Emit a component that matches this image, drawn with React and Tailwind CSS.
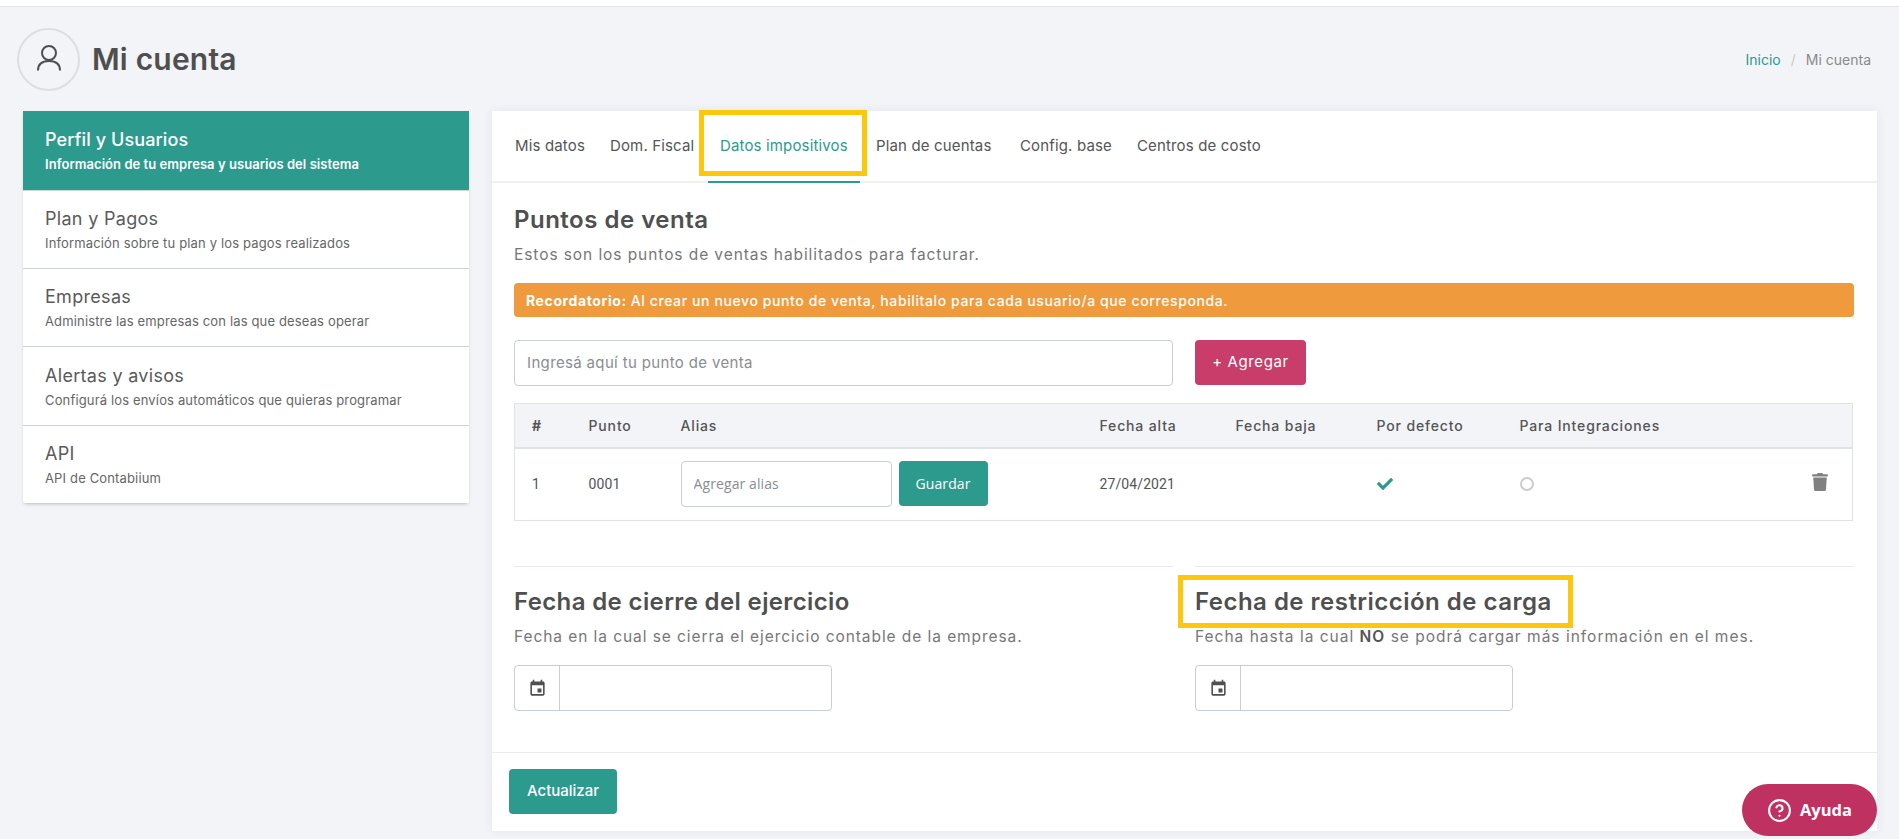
import { MdEvent } from "react-icons/md";
import { FaCheck, FaTrash } from "react-icons/fa";
import { CircleHelp } from "lucide-react";

const menu = [
  { title: "Perfil y Usuarios", sub: "Información de tu empresa y usuarios del sistema", height: "h-[80px]", active: true },
  { title: "Plan y Pagos", sub: "Información sobre tu plan y los pagos realizados", height: "h-[78px]" },
  { title: "Empresas", sub: "Administre las empresas con las que deseas operar", height: "h-[78px]" },
  { title: "Alertas y avisos", sub: "Configurá los envíos automáticos que quieras programar", height: "h-[79px]" },
  { title: "API", sub: "API de Contabiium", height: "h-[78px]" },
];

const tabs = [
  { label: "Mis datos", width: "w-[95px]" },
  { label: "Dom. Fiscal", width: "w-[110px]" },
  { label: "Datos impositivos", width: "w-[152px] mr-[4px]", active: true },
  { label: "Plan de cuentas", width: "w-[144px]" },
  { label: "Config. base", width: "w-[117px]" },
  { label: "Centros de costo", width: "w-[150px]" },
];

const DateField = ({ width, addon }) => (
  <div className={`mt-[18px] flex h-[46px] rounded border border-[#c9cdd4] bg-white ${width}`}>
    <div className={`flex items-center justify-center border-r border-[#c9cdd4] text-[#4f4f4f] ${addon}`}>
      <MdEvent size={19} />
    </div>
    <input className="min-w-0 flex-1 rounded-r outline-none" />
  </div>
);

const App = () => {
  return (
    <div className="relative h-[839px] overflow-hidden bg-[#f3f4f8] font-[Inter,sans-serif] text-[#4f4f4f]">
      <div className="h-[7px] border-b border-[#e3e4e8] bg-white"></div>

      {/* Page header */}
      <div className="flex items-center justify-between pl-[17px] pr-[28px] pt-[21px]">
        <div className="flex items-center gap-[12px]">
          <div className="flex h-[63px] w-[63px] items-center justify-center rounded-full border-2 border-[#dedede]">
            <svg width="24" height="26" viewBox="0 0 24 26" fill="none" stroke="#4f4f4f" strokeWidth="2" className="mb-[3px]">
              <circle cx="12" cy="8" r="7" />
              <path d="M1 25.500c0-5.500 3-9.500 11-9.500s11 4 11 9.500" />
            </svg>
          </div>
          <h1 className="mb-[2px] text-[30px] font-semibold leading-none tracking-[0.2px]">Mi cuenta</h1>
        </div>
        <div className="flex items-center text-[14px]">
          <span className="text-[#2d9a8e]">Inicio</span>
          <span className="mx-[10px] text-[#c9c9c9]">/</span>
          <span className="text-[#8a8a8a]">Mi cuenta</span>
        </div>
      </div>

      <div className="mt-[20px] flex items-start pl-[23px]">
        {/* Side menu */}
        <div className="w-[446px] shrink-0 overflow-hidden rounded-b bg-white shadow-[0_1px_3px_rgba(0,0,0,0.12)]">
          {menu.map((item) => (
            <div
              key={item.title}
              className={`flex flex-col justify-center border-b pl-[22px] ${item.height} ${
                item.active ? "border-[#c9d9d6] bg-[#2d9a8e] text-white" : "border-[#cdd2d9] text-[#5a5a5a]"
              }`}
            >
              <div className={`text-[18px] leading-[26px] ${item.active ? "font-medium tracking-[0.1px]" : "tracking-[0.3px]"}`}>
                {item.title}
              </div>
              <div
                className={`mt-[1px] text-[13px] leading-[20px] ${
                  item.active ? "font-semibold tracking-[0.05px]" : "tracking-[0.15px] text-[#666666]"
                }`}
              >
                {item.sub}
              </div>
            </div>
          ))}
        </div>

        {/* Main panel */}
        <div className="ml-[23px] w-[1385px] shrink-0 bg-white shadow-[0_0_10px_rgba(30,40,70,0.07)]">
          <div className="flex h-[72px] border-b-2 border-[#eef0f4] pl-[11px]">
            {tabs.map((tab) => (
              <div
                key={tab.label}
                className={`relative flex h-[72px] shrink-0 items-center border-b-2 pl-[12px] text-[15px] tracking-[0.15px] ${tab.width} ${
                  tab.active ? "border-[#2d9a8e] text-[#2d9a8e]" : "border-transparent text-[#555555]"
                }`}
              >
                {tab.label}
                {tab.active && (
                  <div className="absolute left-[-9px] top-[-1px] h-[66px] w-[168px] border-[5px] border-[#fdc70c]"></div>
                )}
              </div>
            ))}
          </div>

          <div className="pl-[22px] pr-[23px] pt-[21px]">
            <h2 className="text-[24px] font-semibold leading-[32px] tracking-[0.5px]">Puntos de venta</h2>
            <p className="mt-[9px] text-[15.5px] leading-[20px] tracking-[0.92px] text-[#777777]">
              Estos son los puntos de ventas habilitados para facturar.
            </p>

            <div className="mt-[18px] flex h-[34px] items-center rounded bg-[#f09a3e] pl-[12px] text-[14px] font-medium tracking-[0.6px] text-white">
              <b className="mr-1 font-bold">Recordatorio:</b> Al crear un nuevo punto de venta, habilitalo para cada usuario/a que corresponda.
            </div>

            <div className="mt-[23px] flex items-start">
              <input
                placeholder="Ingresá aquí tu punto de venta"
                className="h-[46px] w-[659px] rounded border border-[#c9cdd4] px-[12px] pb-[2px] text-[15px] tracking-[0.35px] outline-none placeholder:text-[#8a8d91]"
              />
              <button className="ml-[22px] h-[45px] w-[111px] rounded-sm bg-[#c93d6a] text-[15px] tracking-[0.6px] text-white">+ Agregar</button>
            </div>

            <table className="mt-[17px] w-[1339px] table-fixed border border-[#dfe3e8] text-left">
              <colgroup>
                <col className="w-[57px]" />
                <col className="w-[92px]" />
                <col className="w-[419px]" />
                <col className="w-[136px]" />
                <col className="w-[141px]" />
                <col className="w-[143px]" />
                <col />
              </colgroup>
              <thead className="bg-[#f3f4f8] text-[14px] tracking-[0.85px] text-[#555555]">
                <tr className="h-[44px] border-b-2 border-[#dfe3e8]">
                  <th className="pl-[17px] font-bold">#</th>
                  <th className="pl-[17px] font-medium">Punto</th>
                  <th className="pl-[17px] font-medium">Alias</th>
                  <th className="pl-[17px] font-medium">Fecha alta</th>
                  <th className="pl-[17px] font-medium">Fecha baja</th>
                  <th className="pl-[17px] font-medium">Por defecto</th>
                  <th className="pl-[17px] font-medium">Para Integraciones</th>
                </tr>
              </thead>
              <tbody className="font-[Roboto,sans-serif] text-[14px] tracking-[0.1px] text-[#555555]">
                <tr className="h-[73px]">
                  <td className="pl-[17px]">1</td>
                  <td className="pl-[17px]">0001</td>
                  <td className="pl-[17px]">
                    <div className="flex items-start font-['Open_Sans',sans-serif]">
                      <input
                        placeholder="Agregar alias"
                        className="h-[46px] w-[211px] rounded border border-[#c9cdd4] px-[12px] pb-[2px] text-[14px] outline-none placeholder:text-[#8a8d91]"
                      />
                      <button className="ml-[7px] h-[45px] w-[89px] rounded-sm bg-[#2d9a8e] text-[14px] font-medium text-white">Guardar</button>
                    </div>
                  </td>
                  <td className="pl-[17px]">27/04/2021</td>
                  <td></td>
                  <td className="pl-[17px] text-[#2d9a8e]">
                    <FaCheck size={16} />
                  </td>
                  <td className="relative pl-[17px]">
                    <div className="h-[14px] w-[14px] rounded-full border-2 border-[#cccccc]"></div>
                    <FaTrash size={18} className="absolute right-[23px] top-[24px] text-[#808080]" />
                  </td>
                </tr>
              </tbody>
            </table>

            <div className="mt-[45px] flex gap-[22px]">
              <div className="w-[659px] border-t border-[#e6e9ee] pt-[19px]">
                <h2 className="text-[24px] font-semibold leading-[32px] tracking-[0.37px]">Fecha de cierre del ejercicio</h2>
                <p className="mt-[9px] text-[15.5px] leading-[20px] tracking-[0.93px] text-[#777777]">
                  Fecha en la cual se cierra el ejercicio contable de la empresa.
                </p>
                <DateField width="w-[318px]" addon="w-[45px]" />
              </div>
              <div className="w-[659px] border-t border-[#e6e9ee] pt-[19px]">
                <div className="relative">
                  <h2 className="text-[24px] font-semibold leading-[32px] tracking-[0.48px]">Fecha de restricción de carga</h2>
                  <div className="absolute left-[-17px] top-[-11px] h-[53px] w-[395px] border-[5px] border-[#fdc70c]"></div>
                </div>
                <p className="mt-[9px] text-[15.5px] leading-[20px] tracking-[1px] text-[#777777]">
                  Fecha hasta la cual <b className="font-semibold text-[#555555]">NO</b> se podrá cargar más información en el mes.
                </p>
                <DateField width="w-[318px]" addon="w-[45px]" />
              </div>
            </div>
          </div>

          <div className="mt-[41px] border-t border-[#e9ebef] pb-[17px] pl-[17px] pt-[16px]">
            <button className="h-[45px] w-[108px] rounded-sm bg-[#2d9a8e] text-[15px] font-medium text-white">Actualizar</button>
          </div>
        </div>
      </div>

      {/* Help button */}
      <button className="absolute left-[1742px] top-[784px] flex h-[52px] w-[135px] items-center justify-center gap-[8px] rounded-[26px] bg-[#bf3160] font-['Open_Sans',sans-serif] text-[16.5px] font-bold text-white">
        <CircleHelp size={25} strokeWidth={2} />
        Ayuda
      </button>
    </div>
  );
};

export default App;
